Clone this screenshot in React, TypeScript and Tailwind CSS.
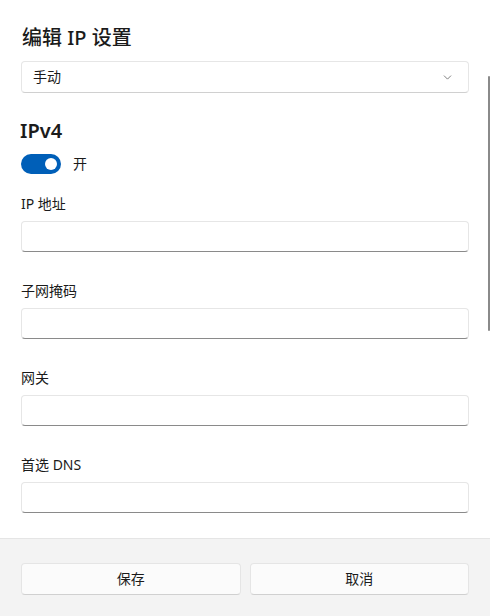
import { ChevronDown } from 'lucide-react'

const fields = ['IP 地址', '子网掩码', '网关', '首选 DNS']

function TextField({ label, first }: { label: string; first?: boolean }) {
  return (
    <div className={first ? 'mt-[20px]' : 'mt-[29px]'}>
      <div className="h-[20px] text-[14px] leading-[20px] text-[#1b1b1b]">{label}</div>
      <div className="mt-[7px] h-[31px] rounded-[4px] border border-[#e6e6e6] border-b-[#8a8a8a] bg-white" />
    </div>
  )
}

export default function App() {
  return (
    <div
      className="flex h-[616px] w-[490px] flex-col bg-white text-[#1b1b1b]"
      style={{ fontFamily: '"Segoe UI", "Noto Sans", "Noto Sans CJK SC", sans-serif' }}
    >
      <div className="relative flex-1 overflow-hidden px-[21px] pt-[24px]">
        <h1 className="h-[28px] pl-[1px] text-[20px] font-medium leading-[28px]">编辑 IP 设置</h1>

        <div className="mt-[9px] flex h-[32px] items-center justify-between rounded-[4px] border border-[#e6e6e6] border-b-[#d0d0d0] bg-white pl-[11px] pr-[14px]">
          <span className="text-[14px] leading-[20px]">手动</span>
          <ChevronDown size={13} strokeWidth={1.4} className="text-[#5a5a5a]" />
        </div>

        <h2 className="mt-[24px] h-[28px] text-[20px] font-semibold leading-[28px] -ml-[1px]">IPv4</h2>

        <div className="mt-[9px] flex h-[20px] items-center gap-[12px]">
          <div className="flex h-[20px] w-[40px] items-center justify-end rounded-full bg-[#005fb8] pr-[4px]">
            <div className="h-[12px] w-[12px] rounded-full bg-white" />
          </div>
          <span className="text-[14px] leading-[20px]">开</span>
        </div>

        {fields.map((f, i) => (
          <TextField key={f} label={f} first={i === 0} />
        ))}

        {/* scrollbar thumb */}
        <div className="absolute right-0 top-[76px] h-[255px] w-[2px] rounded-full bg-[#8a8a8a]" />
      </div>

      <div className="flex h-[78px] gap-[9px] border-t border-[#e5e5e5] bg-[#f3f3f3] px-[21px] pt-[24px]">
        <button className="h-[32px] flex-1 rounded-[4px] border border-[#e5e5e5] border-b-[#d0d0d0] bg-[#fbfbfb] text-[14px] leading-[20px]">
          保存
        </button>
        <button className="h-[32px] flex-1 rounded-[4px] border border-[#e5e5e5] border-b-[#d0d0d0] bg-[#fbfbfb] text-[14px] leading-[20px]">
          取消
        </button>
      </div>
    </div>
  )
}
